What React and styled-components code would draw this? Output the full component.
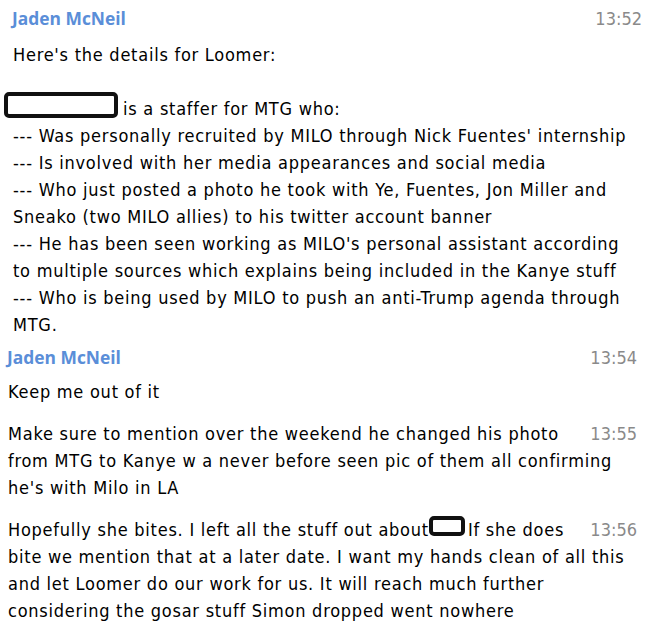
import React from 'react'
import styled, { createGlobalStyle } from 'styled-components'

const GlobalStyle = createGlobalStyle`
  html, body {
    margin: 0;
    padding: 0;
    background: #ffffff;
  }
  body {
    font-family: 'DejaVu Sans Condensed', 'DejaVu Sans', sans-serif;
    color: #000000;
  }
`

const Page = styled.div`
  display: flex;
  flex-direction: column;
  width: 661px;
  padding-top: 6px;
`

// second group of the capture sits 5px further left than the first
const Group = styled.section`
  display: flex;
  flex-direction: column;
  padding: 0 ${(p) => (p.shift ? 24 : 19)}px 0 ${(p) => (p.shift ? 8 : 13)}px;
  & + & {
    margin-top: 7px;
  }
`

const Header = styled.div`
  display: flex;
  justify-content: space-between;
  align-items: center;
  height: 24px;
  margin-bottom: ${(p) => (p.tight ? 9 : 11)}px;
`

const Name = styled.span`
  font-family: 'Open Sans', sans-serif;
  font-weight: 700;
  font-size: 17.4px;
  color: #5a8ed8;
  margin-left: -1px;
`

const Time = styled.span`
  font-size: 18px;
  color: #8a8a8a;
  line-height: 27px;
  flex: none;
  margin-left: auto;
`

const Message = styled.div`
  display: flex;
  align-items: flex-start;
  & + & {
    margin-top: 15px;
  }
`

const Body = styled.div`
  display: flex;
  flex-direction: column;
  flex: 1;
  min-width: 0;
`

const Line = styled.div`
  font-size: 18px;
  letter-spacing: 0.75px;
  line-height: 27px;
  height: 27px;
  white-space: pre;
`

const Redacted = styled.span`
  display: inline-block;
  box-sizing: border-box;
  width: ${(p) => p.w}px;
  height: ${(p) => p.h}px;
  border: 4px solid #111;
  border-radius: 5px;
  background: #fff;
  vertical-align: middle;
  margin: ${(p) => p.m || '0'};
  position: relative;
  top: -5px;
`

const first = [
  "--- Was personally recruited by MILO through Nick Fuentes' internship",
  '--- Is involved with her media appearances and social media',
  '--- Who just posted a photo he took with Ye, Fuentes, Jon Miller and',
  'Sneako (two MILO allies) to his twitter account banner',
  "--- He has been seen working as MILO's personal assistant according",
  'to multiple sources which explains being included in the Kanye stuff',
  '--- Who is being used by MILO to push an anti-Trump agenda through',
  'MTG.'
]

export default function App() {
  return (
    <Page>
      <GlobalStyle />
      <Group>
        <Header>
          <Name>Jaden McNeil</Name>
          <Time>13:52</Time>
        </Header>
        <Body>
          <Line>Here's the details for Loomer:</Line>
          <Line />
          <Line>
            <Redacted w={114} h={26} m='0 5px 0 -9px' />
            is a staffer for MTG who:
          </Line>
          {first.map((t) => (
            <Line key={t}>{t}</Line>
          ))}
        </Body>
      </Group>
      <Group shift>
        <Header tight>
          <Name>Jaden McNeil</Name>
          <Time>13:54</Time>
        </Header>
        <Message>
          <Body>
            <Line>Keep me out of it</Line>
          </Body>
        </Message>
        <Message>
          <Body>
            <Line>Make sure to mention over the weekend he changed his photo</Line>
            <Line>from MTG to Kanye w a never before seen pic of them all confirming</Line>
            <Line>he's with Milo in LA</Line>
          </Body>
          <Time>13:55</Time>
        </Message>
        <Message>
          <Body>
            <Line>
              Hopefully she bites. I left all the stuff out about
              <Redacted w={36} h={20} m='0 3px 0 0' />
              If she does
            </Line>
            <Line>bite we mention that at a later date. I want my hands clean of all this</Line>
            <Line>and let Loomer do our work for us. It will reach much further</Line>
            <Line>considering the gosar stuff Simon dropped went nowhere</Line>
          </Body>
          <Time>13:56</Time>
        </Message>
      </Group>
    </Page>
  )
}
